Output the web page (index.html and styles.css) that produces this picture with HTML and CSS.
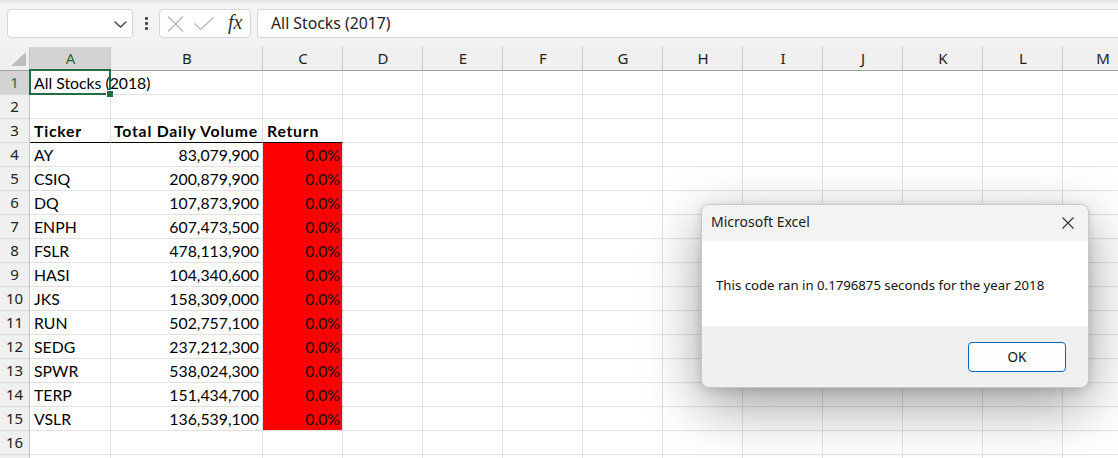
FILE: index.html
```html
<!DOCTYPE html>
<html lang="en">
<head>
<meta charset="utf-8">
<title>Excel</title>
<link rel="stylesheet" href="styles.css">
</head>
<body>
<div class="app">
  <div class="topbar">
    <div class="namebox">
      <svg class="chev" width="13" height="7" viewBox="0 0 13 7"><path d="M0.5 0.5 L6.5 6 L12.5 0.5" fill="none" stroke="#444" stroke-width="1.3"/></svg>
    </div>
    <div class="dots"><span></span><span></span><span></span></div>
    <div class="fxbox">
      <svg width="17" height="16" viewBox="0 0 17 16"><path d="M1 0.5 L16 15.5 M16 0.5 L1 15.5" stroke="#b4b4b4" stroke-width="1.2" fill="none"/></svg>
      <svg width="20" height="14" viewBox="0 0 20 14"><path d="M0.5 6.5 L6.5 12.5 L19.5 0.5" stroke="#b4b4b4" stroke-width="1.2" fill="none"/></svg>
      <span class="fx">fx</span>
    </div>
    <div class="formula">All Stocks (2017)</div>
  </div>

  <div class="sheet">
    <div class="row head">
      <div class="c rh corner"><span class="tri"></span></div>
      <div class="c a sel">A</div>
      <div class="c b">B</div>
      <div class="c n">C</div>
      <div class="c n">D</div>
      <div class="c n">E</div>
      <div class="c n">F</div>
      <div class="c n">G</div>
      <div class="c n">H</div>
      <div class="c n">I</div>
      <div class="c n">J</div>
      <div class="c n">K</div>
      <div class="c n">L</div>
      <div class="c n">M</div>
    </div>

    <div class="row">
      <div class="c rh sel">1</div>
      <div class="c a over">All Stocks (2018)</div>
      <div class="c b"></div><div class="c n"></div>
      <div class="c n"></div><div class="c n"></div><div class="c n"></div><div class="c n"></div><div class="c n"></div><div class="c n"></div><div class="c n"></div><div class="c n"></div><div class="c n"></div><div class="c n"></div>
    </div>
    <div class="row">
      <div class="c rh">2</div>
      <div class="c a"></div><div class="c b"></div><div class="c n"></div>
      <div class="c n"></div><div class="c n"></div><div class="c n"></div><div class="c n"></div><div class="c n"></div><div class="c n"></div><div class="c n"></div><div class="c n"></div><div class="c n"></div><div class="c n"></div>
    </div>
    <div class="row">
      <div class="c rh">3</div>
      <div class="c a th">Ticker</div><div class="c b th">Total Daily Volume</div><div class="c n th">Return</div>
      <div class="c n"></div><div class="c n"></div><div class="c n"></div><div class="c n"></div><div class="c n"></div><div class="c n"></div><div class="c n"></div><div class="c n"></div><div class="c n"></div><div class="c n"></div>
    </div>
    <div class="row">
      <div class="c rh">4</div>
      <div class="c a">AY</div><div class="c b num">83,079,900</div><div class="c n ret">0.0%</div>
      <div class="c n"></div><div class="c n"></div><div class="c n"></div><div class="c n"></div><div class="c n"></div><div class="c n"></div><div class="c n"></div><div class="c n"></div><div class="c n"></div><div class="c n"></div>
    </div>
    <div class="row">
      <div class="c rh">5</div>
      <div class="c a">CSIQ</div><div class="c b num">200,879,900</div><div class="c n ret">0.0%</div>
      <div class="c n"></div><div class="c n"></div><div class="c n"></div><div class="c n"></div><div class="c n"></div><div class="c n"></div><div class="c n"></div><div class="c n"></div><div class="c n"></div><div class="c n"></div>
    </div>
    <div class="row">
      <div class="c rh">6</div>
      <div class="c a">DQ</div><div class="c b num">107,873,900</div><div class="c n ret">0.0%</div>
      <div class="c n"></div><div class="c n"></div><div class="c n"></div><div class="c n"></div><div class="c n"></div><div class="c n"></div><div class="c n"></div><div class="c n"></div><div class="c n"></div><div class="c n"></div>
    </div>
    <div class="row">
      <div class="c rh">7</div>
      <div class="c a">ENPH</div><div class="c b num">607,473,500</div><div class="c n ret">0.0%</div>
      <div class="c n"></div><div class="c n"></div><div class="c n"></div><div class="c n"></div><div class="c n"></div><div class="c n"></div><div class="c n"></div><div class="c n"></div><div class="c n"></div><div class="c n"></div>
    </div>
    <div class="row">
      <div class="c rh">8</div>
      <div class="c a">FSLR</div><div class="c b num">478,113,900</div><div class="c n ret">0.0%</div>
      <div class="c n"></div><div class="c n"></div><div class="c n"></div><div class="c n"></div><div class="c n"></div><div class="c n"></div><div class="c n"></div><div class="c n"></div><div class="c n"></div><div class="c n"></div>
    </div>
    <div class="row">
      <div class="c rh">9</div>
      <div class="c a">HASI</div><div class="c b num">104,340,600</div><div class="c n ret">0.0%</div>
      <div class="c n"></div><div class="c n"></div><div class="c n"></div><div class="c n"></div><div class="c n"></div><div class="c n"></div><div class="c n"></div><div class="c n"></div><div class="c n"></div><div class="c n"></div>
    </div>
    <div class="row">
      <div class="c rh">10</div>
      <div class="c a">JKS</div><div class="c b num">158,309,000</div><div class="c n ret">0.0%</div>
      <div class="c n"></div><div class="c n"></div><div class="c n"></div><div class="c n"></div><div class="c n"></div><div class="c n"></div><div class="c n"></div><div class="c n"></div><div class="c n"></div><div class="c n"></div>
    </div>
    <div class="row">
      <div class="c rh">11</div>
      <div class="c a">RUN</div><div class="c b num">502,757,100</div><div class="c n ret">0.0%</div>
      <div class="c n"></div><div class="c n"></div><div class="c n"></div><div class="c n"></div><div class="c n"></div><div class="c n"></div><div class="c n"></div><div class="c n"></div><div class="c n"></div><div class="c n"></div>
    </div>
    <div class="row">
      <div class="c rh">12</div>
      <div class="c a">SEDG</div><div class="c b num">237,212,300</div><div class="c n ret">0.0%</div>
      <div class="c n"></div><div class="c n"></div><div class="c n"></div><div class="c n"></div><div class="c n"></div><div class="c n"></div><div class="c n"></div><div class="c n"></div><div class="c n"></div><div class="c n"></div>
    </div>
    <div class="row">
      <div class="c rh">13</div>
      <div class="c a">SPWR</div><div class="c b num">538,024,300</div><div class="c n ret">0.0%</div>
      <div class="c n"></div><div class="c n"></div><div class="c n"></div><div class="c n"></div><div class="c n"></div><div class="c n"></div><div class="c n"></div><div class="c n"></div><div class="c n"></div><div class="c n"></div>
    </div>
    <div class="row">
      <div class="c rh">14</div>
      <div class="c a">TERP</div><div class="c b num">151,434,700</div><div class="c n ret">0.0%</div>
      <div class="c n"></div><div class="c n"></div><div class="c n"></div><div class="c n"></div><div class="c n"></div><div class="c n"></div><div class="c n"></div><div class="c n"></div><div class="c n"></div><div class="c n"></div>
    </div>
    <div class="row">
      <div class="c rh">15</div>
      <div class="c a">VSLR</div><div class="c b num">136,539,100</div><div class="c n ret last">0.0%</div>
      <div class="c n"></div><div class="c n"></div><div class="c n"></div><div class="c n"></div><div class="c n"></div><div class="c n"></div><div class="c n"></div><div class="c n"></div><div class="c n"></div><div class="c n"></div>
    </div>
    <div class="row">
      <div class="c rh">16</div>
      <div class="c a"></div><div class="c b"></div><div class="c n"></div>
      <div class="c n"></div><div class="c n"></div><div class="c n"></div><div class="c n"></div><div class="c n"></div><div class="c n"></div><div class="c n"></div><div class="c n"></div><div class="c n"></div><div class="c n"></div>
    </div>
    <div class="row">
      <div class="c rh"></div>
      <div class="c a"></div><div class="c b"></div><div class="c n"></div>
      <div class="c n"></div><div class="c n"></div><div class="c n"></div><div class="c n"></div><div class="c n"></div><div class="c n"></div><div class="c n"></div><div class="c n"></div><div class="c n"></div><div class="c n"></div>
    </div>

    <div class="selbox"><span class="handle"></span></div>
  </div>

  <div class="dialog">
    <div class="dlg-title">
      <span>Microsoft Excel</span>
      <svg class="close" width="12" height="12" viewBox="0 0 12 12"><path d="M0.5 0.5 L11.5 11.5 M11.5 0.5 L0.5 11.5" stroke="#333" stroke-width="1.1" fill="none"/></svg>
    </div>
    <div class="dlg-body">This code ran in 0.1796875 seconds for the year 2018</div>
    <div class="dlg-foot"><button class="ok">OK</button></div>
  </div>
</div>
</body>
</html>
```

FILE: styles.css
```css
html, body {
  margin: 0;
  padding: 0;
  background: #fff;
}
.app {
  position: relative;
  width: 1118px;
  height: 458px;
  overflow: hidden;
  font-family: "Noto Sans", sans-serif;
  color: #222;
}
.topbar {
  height: 47px;
  box-sizing: border-box;
  background: linear-gradient(#e4e4e4 0, #f2f2f2 4px, #f3f3f3 9px);
  display: flex;
  align-items: flex-start;
  padding: 9px 0 0 7px;
}
.namebox {
  width: 126px;
  height: 29px;
  box-sizing: border-box;
  background: #fff;
  border: 1px solid #d6d6d6;
  border-radius: 4px;
  display: flex;
  align-items: center;
  justify-content: flex-end;
  padding-right: 5px;
}
.chev { display: block; margin-top: 1px; }
.dots {
  width: 26px;
  height: 29px;
  display: flex;
  flex-direction: column;
  align-items: center;
  justify-content: center;
  gap: 2px;
}
.dots span {
  width: 3px;
  height: 3px;
  background: #444;
  border-radius: 1px;
}
.fxbox {
  width: 92px;
  height: 29px;
  box-sizing: border-box;
  background: #fff;
  border: 1px solid #d6d6d6;
  border-radius: 4px;
  display: flex;
  align-items: center;
  padding-left: 7px;
  gap: 10px;
}
.fxbox svg { display: block; }
.fx {
  font-family: "Liberation Serif", serif;
  font-style: italic;
  font-size: 20px;
  color: #333;
  margin-left: 4px;
  margin-top: -2px;
}
.formula {
  flex: 1;
  margin-left: 6px;
  height: 29px;
  box-sizing: border-box;
  background: #fff;
  border: 1px solid #d6d6d6;
  border-right: none;
  border-radius: 4px 0 0 4px;
  padding-left: 13px;
  font-size: 15.8px;
  line-height: 27px;
  color: #222;
}

.sheet {
  position: relative;
  width: 1118px;
  overflow: hidden;
}
.row {
  display: flex;
  height: 24px;
}
.c {
  flex: none;
  box-sizing: border-box;
  height: 24px;
  border-right: 1px solid #e1e1e1;
  border-bottom: 1px solid #e1e1e1;
  font-family: "Lato", sans-serif;
  font-size: 15.8px;
  line-height: 23px;
  white-space: nowrap;
  padding: 0 3px 0 4px;
  color: #000;
}
.rh {
  width: 30px;
  background: #f0f0f0;
  border-right-color: #c4c4c4;
  border-bottom-color: #dadada;
  font-family: "Noto Sans", sans-serif;
  font-size: 15px;
  text-align: center;
  padding: 0;
  color: #222;
}
.rh.sel {
  background: #d3d3d3;
  color: #1e6b3f;
}
.a { width: 81px; }
.b { width: 152px; }
.n { width: 80px; }
.over { overflow: visible; }

.head .c {
  background: #f0f0f0;
  border-bottom-color: #9f9f9f;
  border-right-color: #c9c9c9;
  font-family: "Noto Sans", sans-serif;
  font-size: 15px;
  text-align: center;
  color: #222;
}
.head .c.sel {
  background: #d3d3d3;
  color: #1e6b3f;
}
.head .corner {
  position: relative;
  border-right-color: #c4c4c4;
}
.tri {
  position: absolute;
  right: 3px;
  bottom: 4px;
  width: 15px;
  height: 14px;
  background: #bdbdbd;
  clip-path: polygon(100% 0, 100% 100%, 0 100%);
}
.th {
  font-weight: 700;
  letter-spacing: 0.75px;
  border-bottom-color: #000;
}
.b.th { padding-left: 3px; }
.num { text-align: right; }
.ret {
  text-align: right;
  background: #ff0000;
  border-bottom-color: #ff0000;
  color: #111;
  padding-right: 2px;
}
.ret.last { border-bottom-color: #e1e1e1; }

.selbox {
  position: absolute;
  left: 29px;
  top: 22px;
  width: 82px;
  height: 26px;
  box-sizing: border-box;
  border: 2px solid #1f6e43;
}
.handle {
  position: absolute;
  right: -5px;
  bottom: -5px;
  width: 6px;
  height: 6px;
  background: #1f6e43;
  border: 1px solid #fff;
}

.dialog {
  position: absolute;
  left: 701px;
  top: 204px;
  width: 388px;
  height: 184px;
  box-sizing: border-box;
  border: 1px solid #c8c8c8;
  border-radius: 8px;
  background: #f0f0f0;
  overflow: hidden;
  display: flex;
  flex-direction: column;
  box-shadow: 0 18px 56px rgba(0, 0, 0, 0.38), 0 2px 10px rgba(0, 0, 0, 0.14);
}
.dlg-title {
  height: 36px;
  flex: none;
  box-sizing: border-box;
  background: #f3f3f3;
  display: flex;
  align-items: center;
  justify-content: space-between;
  padding: 0 14px 3px 9px;
  font-size: 14px;
  color: #1a1a1a;
}
.close { display: block; margin-top: 2px; }
.dlg-body {
  height: 85px;
  flex: none;
  background: #fff;
  box-sizing: border-box;
  padding: 36px 0 0 14px;
  font-size: 13.2px;
  line-height: 16px;
  color: #111;
}
.dlg-foot {
  flex: 1;
  display: flex;
  justify-content: flex-end;
  align-items: flex-start;
  padding: 16px 22px 0 0;
}
.ok {
  width: 98px;
  height: 30px;
  box-sizing: border-box;
  background: #fdfdfd;
  border: 1px solid #0067c0;
  border-radius: 4px;
  font-family: "Noto Sans", sans-serif;
  font-size: 13.5px;
  color: #111;
  padding: 0;
}
```
